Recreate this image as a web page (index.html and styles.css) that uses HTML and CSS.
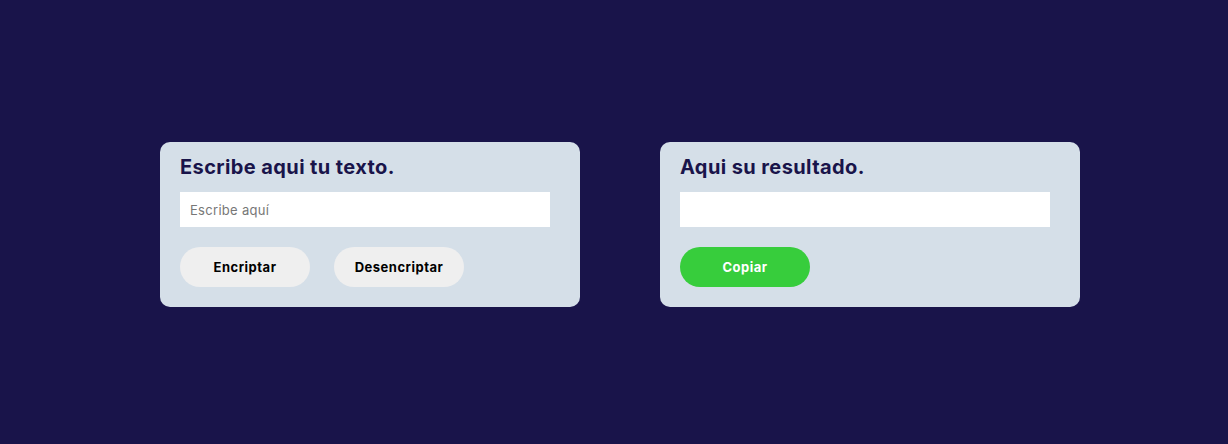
FILE: index.html
```html
<!DOCTYPE html>
<html lang="es">
<head>
<meta charset="utf-8">
<title>Encriptador</title>
<link rel="stylesheet" href="styles.css">
</head>
<body>
<main class="page">
  <section class="card">
    <h2 class="card-title">Escribe aqui tu texto.</h2>
    <input class="field" type="text" placeholder="Escribe aquí">
    <div class="actions">
      <button class="btn">Encriptar</button>
      <button class="btn">Desencriptar</button>
    </div>
  </section>
  <section class="card">
    <h2 class="card-title">Aqui su resultado.</h2>
    <input class="field" type="text">
    <div class="actions">
      <button class="btn btn-green">Copiar</button>
    </div>
  </section>
</main>
</body>
</html>
```
FILE: styles.css
```css
* { box-sizing: border-box; }
html, body { margin: 0; padding: 0; }
body {
  background: #19144a;
  font-family: "Inter", "Liberation Sans", sans-serif;
}
.page {
  height: 444px;
  display: flex;
  justify-content: center;
  align-items: center;
  gap: 80px;
  padding: 5px 0 0 12px;
}
.card {
  width: 420px;
  height: 165px;
  background: #d5dfe8;
  border-radius: 10px;
  padding: 10px 20px 20px;
  display: flex;
  flex-direction: column;
}
.card-title {
  margin: 0 0 10px;
  font-size: 20px;
  line-height: 30px;
  font-weight: 700;
  color: #19144a;
  letter-spacing: 0.4px;
}
.field {
  width: 370px;
  height: 35px;
  border: none;
  outline: none;
  background: #fff;
  padding: 0 10px;
  font-family: inherit;
  font-size: 13px;
  letter-spacing: 0.3px;
  color: #333;
}
.field::placeholder { color: #777; }
.actions {
  display: flex;
  gap: 24px;
  margin-top: 20px;
}
.btn {
  width: 130px;
  height: 40px;
  border: none;
  border-radius: 20px;
  background: #efefef;
  color: #000;
  font-family: inherit;
  font-size: 13px;
  font-weight: 700;
  letter-spacing: 0.5px;
}
.btn-green {
  background: #37cd3c;
  color: #fff;
}
```
